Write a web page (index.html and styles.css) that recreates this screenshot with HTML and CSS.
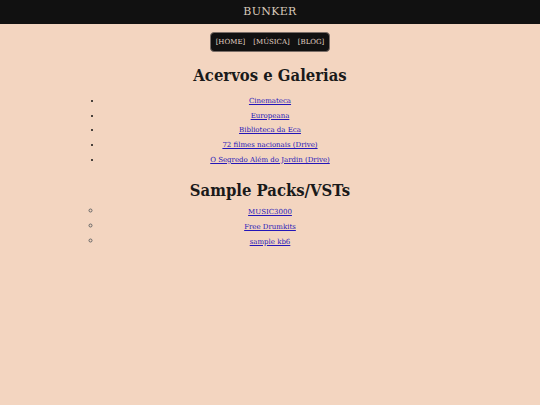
FILE: index.html
```html
<!DOCTYPE html>
<html lang="pt">
<head>
<meta charset="utf-8">
<title>BUNKER</title>
<link rel="stylesheet" href="styles.css">
</head>
<body>
<header class="topbar">BUNKER</header>
<nav class="menu">
  <a href="#">[HOME]</a>
  <a href="#">[MÚSICA]</a>
  <a href="#">[BLOG]</a>
</nav>
<main class="content">
  <h1 class="title">Acervos e Galerias</h1>
  <ul class="links disc">
    <li><a href="#">Cinemateca</a></li>
    <li><a href="#">Europeana</a></li>
    <li><a href="#">Biblioteca da Eca</a></li>
    <li><a href="#">72 filmes nacionais (Drive)</a></li>
    <li><a href="#">O Segredo Além do Jardin (Drive)</a></li>
  </ul>
  <h1 class="title second">Sample Packs/VSTs</h1>
  <ul class="links circle">
    <li><a href="#">MUSIC3000</a></li>
    <li><a href="#">Free Drumkits</a></li>
    <li><a href="#">sample kb6</a></li>
  </ul>
</main>
</body>
</html>
```
FILE: styles.css
```css
html, body {
  margin: 0;
  padding: 0;
  background: #f3d5c0;
  font-family: "DejaVu Serif", "Liberation Serif", serif;
  color: #1a1a1a;
}
.topbar {
  background: #111111;
  color: #d9cabb;
  text-align: center;
  font-size: 11px;
  height: 24px;
  line-height: 24px;
  letter-spacing: 0.3px;
}
.menu {
  width: fit-content;
  margin: 8px auto 0;
  background: #111111;
  border: 1px solid #7a6e68;
  border-radius: 4px;
  padding: 0 5px;
  height: 18px;
  display: flex;
  align-items: center;
  gap: 8px;
}
.menu a {
  color: #e2d4c6;
  text-decoration: none;
  font-size: 7px;
}
.content {
  text-align: center;
}
.title {
  font-family: "DejaVu Serif Condensed", "DejaVu Serif", serif;
  font-size: 16.5px;
  font-weight: bold;
  margin: 14px 0 8px;
  line-height: 20px;
}
.title.second {
  margin: 14px 0 3px;
}
.links {
  margin: 0 102px;
  padding: 0;
  font-size: 7px;
}
.links li {
  height: 14.7px;
  line-height: 14.7px;
}
.links li::marker {
  font-size: 8px;
  color: #111;
}
.circle li::marker {
  font-size: 10px;
  color: #666;
}
.disc { list-style: disc; }
.circle { list-style: circle; }
.links a {
  color: #2416b8;
}
```
